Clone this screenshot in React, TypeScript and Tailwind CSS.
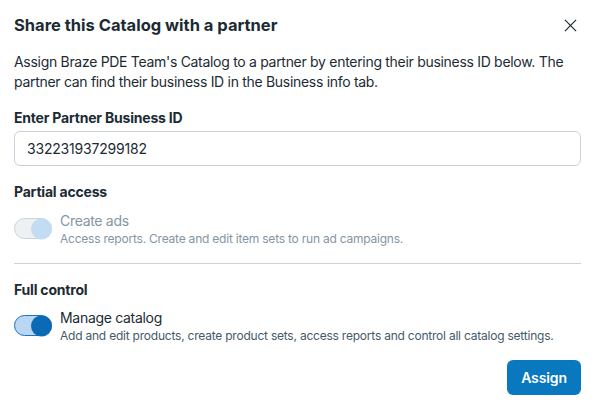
import { useState } from 'react';

function Toggle({ on, disabled }: { on: boolean; disabled?: boolean }) {
  const track = disabled
    ? 'bg-[#eef1f4] border-[#cbd2d9]'
    : on
      ? 'bg-[#b9d6f2] border-[#1b74c5]'
      : 'bg-white border-[#cbd2d9]';
  const knob = disabled ? 'bg-[#c3dcf4]' : 'bg-[#0a6ab6]';
  return (
    <div className={`relative mt-[7px] h-[21px] w-[38px] shrink-0 rounded-full border ${track}`}>
      <span
        className={`absolute top-1/2 h-[21px] w-[21px] -translate-y-1/2 rounded-full ${knob} ${on ? 'right-[-1px]' : 'left-[-1px]'}`}
      />
    </div>
  );
}

export default function App() {
  const [partnerId, setPartnerId] = useState('332231937299182');

  return (
    <div className="h-[411px] w-[595px] bg-white px-[14px] text-[#1c2b33] font-['Inter',sans-serif]">
      {/* header */}
      <div className="flex h-[50px] items-center justify-between">
        <h1 className="text-[16.5px] font-bold">Share this Catalog with a partner</h1>
        <button className="mr-[4px] text-[#1c2b33]" aria-label="Close">
          <svg width="13" height="13" viewBox="0 0 14 14" fill="none" stroke="currentColor" strokeWidth="1.3">
            <path d="M1 1l12 12M13 1L1 13" />
          </svg>
        </button>
      </div>

      <p className="mt-[2px] text-[14px] leading-[20px] tracking-[-0.3px]">
        Assign Braze PDE Team's Catalog to a partner by entering their business ID below. The partner can find their business ID in the Business info tab.
      </p>

      <label className="mt-[16px] block text-[14px] font-bold leading-[20px] tracking-[-0.2px]">Enter Partner Business ID</label>
      <input
        value={partnerId}
        onChange={(e) => setPartnerId(e.target.value)}
        className="mt-[3px] h-[35px] w-full rounded-[6px] border border-[#cbd2d9] px-[12px] text-[14px] tracking-[-0.2px] outline-none"
      />

      {/* partial access */}
      <h2 className="mt-[16px] text-[14px] font-bold leading-[20px] tracking-[-0.2px]">Partial access</h2>
      <div className="mt-[9px] flex gap-[8px]">
        <Toggle on disabled />
        <div>
          <div className="text-[14px] leading-[20px] tracking-[-0.3px] text-[#8595a4]">Create ads</div>
          <div className="text-[12px] leading-[16px] tracking-[-0.22px] text-[#8595a4]">Access reports. Create and edit item sets to run ad campaigns.</div>
        </div>
      </div>

      <div className="mt-[16px] h-px bg-[#cbd2d9]" />

      {/* full control */}
      <h2 className="mt-[16px] text-[14px] font-bold leading-[20px] tracking-[-0.2px]">Full control</h2>
      <div className="mt-[8px] flex gap-[8px]">
        <Toggle on />
        <div>
          <div className="text-[14px] leading-[20px] tracking-[-0.3px]">Manage catalog</div>
          <div className="text-[12px] leading-[16px] tracking-[-0.22px] text-[#465a69]">
            Add and edit products, create product sets, access reports and control all catalog settings.
          </div>
        </div>
      </div>

      <div className="mt-[16px] flex justify-end">
        <button className="h-[35px] rounded-[6px] bg-[#0a78be] px-[14px] text-[14px] font-semibold tracking-[-0.1px] text-white">Assign</button>
      </div>
    </div>
  );
}
